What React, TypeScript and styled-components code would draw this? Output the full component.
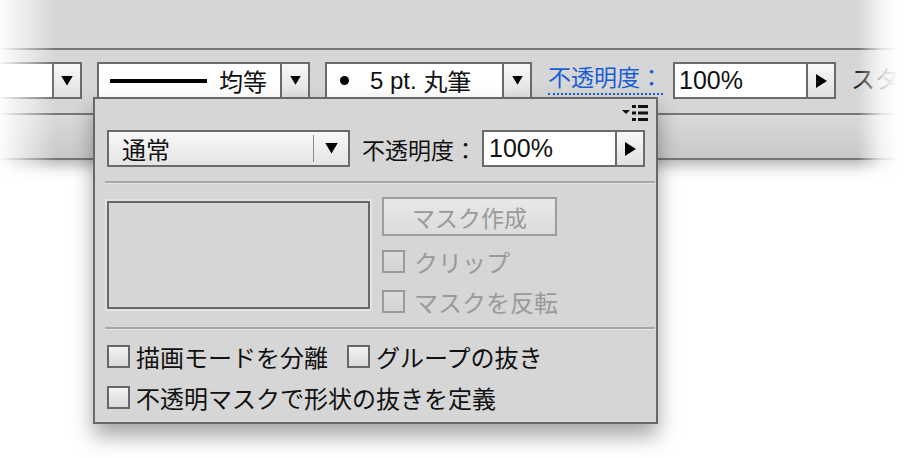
import styled, { createGlobalStyle } from 'styled-components'

const GlobalStyle = createGlobalStyle`
  html, body {
    margin: 0;
    padding: 0;
    background: #fff;
  }
  body {
    font-family: "Liberation Sans", "Noto Sans CJK JP", sans-serif;
    color: #111;
  }
`

const Page = styled.div`
  position: relative;
  width: 908px;
  height: 458px;
  background: #fff;
  overflow: hidden;
`

const Window = styled.div`
  position: relative;
  background: #d6d6d6;
  box-shadow: 0 5px 14px rgba(0, 0, 0, 0.32);
`

const TopArea = styled.div`
  height: 48px;
`

const Toolbar = styled.div`
  display: flex;
  align-items: flex-start;
  gap: 15px;
  height: 67px;
  box-sizing: border-box;
  padding-top: 12px;
  margin-left: -2px;
  border-top: 2px solid #767676;
  border-bottom: 2px solid #767676;
  overflow: hidden;
  white-space: nowrap;
`

const Strip = styled.div`
  height: 43px;
  border-bottom: 2px solid #767676;
  background: linear-gradient(#dadada, #c8c8c8);
`

const Fade = styled.div<{ side: 'left' | 'right' }>`
  position: absolute;
  top: 0;
  height: 190px;
  pointer-events: none;
  z-index: 2;
  ${({ side }) =>
    side === 'left'
      ? `left: 0; width: 56px; background: linear-gradient(to right, rgba(255,255,255,0.95), rgba(255,255,255,0));`
      : `right: 0; width: 50px; background: linear-gradient(to right, rgba(255,255,255,0), rgba(255,255,255,0.75) 45%, #fff 80%);`}
`

const Combo = styled.div<{ w: number }>`
  display: flex;
  flex-shrink: 0;
  width: ${({ w }) => w}px;
  height: 37px;
  box-sizing: border-box;
  border: 2px solid #6a6a6a;
  background: #fff;
`

const ComboBody = styled.div<{ pad?: number }>`
  flex: 1;
  display: flex;
  align-items: center;
  padding-left: ${({ pad }) => pad ?? 0}px;
  font-size: 24px;
`

const ArrowPart = styled.div`
  width: 28px;
  box-sizing: border-box;
  border-left: 2px solid #6a6a6a;
  background: linear-gradient(#f8f8f8, #e0e0e0);
  display: flex;
  align-items: center;
  justify-content: center;
`

const StrokeLine = styled.div`
  width: 97px;
  height: 4px;
  background: #000;
  margin-right: 12px;
`

const Dot = styled.div`
  width: 9px;
  height: 9px;
  border-radius: 50%;
  background: #000;
  margin-right: 21px;
`

const LinkLabel = styled.span`
  display: block;
  margin-top: 2px;
  margin-left: 1px;
  line-height: 29px;
  font-size: 23px;
  color: #1a5ed6;
  border-bottom: 2px dotted #1a5ed6;
  margin-right: -5px;
`

const ValueText = styled.span<{ size?: number }>`
  font-family: "Liberation Sans", Arial, sans-serif;
  font-size: ${({ size }) => size ?? 24}px;
`

const CutText = styled.span`
  font-size: 24px;
  line-height: 36px;
  color: #222;
`

const Panel = styled.div`
  position: absolute;
  left: 93px;
  top: 97px;
  width: 565px;
  height: 327px;
  box-sizing: border-box;
  z-index: 3;
  padding: 0 10px 0 12px;
  background: #d6d6d6;
  border: 2px solid #686868;
  box-shadow: 0 12px 20px rgba(0, 0, 0, 0.35);
`

const PanelHeader = styled.div`
  display: flex;
  justify-content: flex-end;
  height: 31px;
  padding-top: 6px;
  box-sizing: border-box;
  margin-right: -2px;
`

const Row = styled.div`
  display: flex;
  align-items: center;
  white-space: nowrap;
`

const Select = styled.div`
  display: flex;
  flex-shrink: 0;
  align-items: center;
  width: 243px;
  height: 37px;
  box-sizing: border-box;
  border: 2px solid #6a6a6a;
  background: linear-gradient(#f8f8f8, #e4e4e4);
  font-size: 24px;
`

const SelectText = styled.span`
  flex: 1;
  padding-left: 13px;
`

const SelectDivider = styled.div`
  width: 1px;
  height: 27px;
  background: #8a8a8a;
`

const SelectArrow = styled.div`
  width: 34px;
  display: flex;
  justify-content: center;
`

const Label = styled.span`
  font-size: 23px;
  margin: 0 5px 0 12px;
`

const Separator = styled.div<{ top: number }>`
  height: 2px;
  margin: ${({ top }) => top}px -9px 0 -2px;
  background: #a6a6a6;
  border-bottom: 1px solid #e6e6e6;
`

const MaskArea = styled.div`
  display: flex;
  padding-top: 13px;
`

const Thumb = styled.div`
  width: 263px;
  height: 108px;
  margin-top: 4px;
  box-sizing: border-box;
  border: 2px solid #686868;
  box-shadow: 0 0 0 2px #e2e2e2;
  background: #d6d6d6;
`

const MaskColumn = styled.div`
  display: flex;
  flex-direction: column;
  margin-left: 12px;
`

const MaskButton = styled.div`
  width: 175px;
  height: 39px;
  box-sizing: border-box;
  border: 2px solid #9d9d9d;
  background: linear-gradient(#e8e8e8, #dcdcdc);
  color: #9a9a9a;
  font-size: 23px;
  display: flex;
  align-items: center;
  justify-content: center;
  margin-bottom: 14px;
`

const CheckRow = styled.div<{ gap?: number }>`
  display: flex;
  align-items: center;
  height: 23px;
  white-space: nowrap;
  margin-bottom: ${({ gap }) => gap ?? 0}px;
`

const CheckItem = styled.label<{ disabled?: boolean }>`
  display: flex;
  align-items: center;
  font-size: 24px;
  color: ${({ disabled }) => (disabled ? '#9a9a9a' : '#111')};
  margin-right: 19px;
`

const Box = styled.span<{ disabled?: boolean }>`
  display: block;
  width: 23px;
  height: 23px;
  box-sizing: border-box;
  margin-right: ${({ disabled }) => (disabled ? 9 : 6)}px;
  border: 2px solid ${({ disabled }) => (disabled ? '#9b9b9b' : '#666')};
  background: ${({ disabled }) =>
    disabled ? 'linear-gradient(#dedede, #d2d2d2)' : 'linear-gradient(#f4f4f4, #d9d9d9)'};
`

const Options = styled.div`
  padding-top: 15px;
`

const DownTri = ({ size = 12 }: { size?: number }) => (
  <svg width={size} height={size * 0.8} viewBox="0 0 12 10">
    <polygon points="0,0 12,0 6,10" fill="#000" />
  </svg>
)

const RightTri = () => (
  <svg width="11" height="14" viewBox="0 0 11 14">
    <polygon points="0,0 11,7 0,14" fill="#000" />
  </svg>
)

const MenuIcon = () => (
  <svg width="26" height="16" viewBox="0 0 26 16">
    <polygon points="0,5 8,5 4,9" fill="#111" />
    <rect x="10" y="0" width="4" height="3" fill="#111" />
    <rect x="16" y="0" width="10" height="3" fill="#111" />
    <rect x="10" y="6.5" width="4" height="3" fill="#111" />
    <rect x="16" y="6.5" width="10" height="3" fill="#111" />
    <rect x="10" y="13" width="4" height="3" fill="#111" />
    <rect x="16" y="13" width="10" height="3" fill="#111" />
  </svg>
)

export default function App() {
  return (
    <Page>
      <GlobalStyle />
      <Window>
        <TopArea />
        <Toolbar>
          <Combo w={84}>
            <ComboBody />
            <ArrowPart>
              <DownTri />
            </ArrowPart>
          </Combo>
          <Combo w={213}>
            <ComboBody pad={11}>
              <StrokeLine />
              均等
            </ComboBody>
            <ArrowPart>
              <DownTri size={11} />
            </ArrowPart>
          </Combo>
          <Combo w={207}>
            <ComboBody pad={13}>
              <Dot />
              <ValueText>5 pt.&nbsp;</ValueText>丸筆
            </ComboBody>
            <ArrowPart>
              <DownTri size={11} />
            </ArrowPart>
          </Combo>
          <LinkLabel>不透明度：</LinkLabel>
          <Combo w={163}>
            <ComboBody pad={4}>
              <ValueText size={25}>100%</ValueText>
            </ComboBody>
            <ArrowPart>
              <RightTri />
            </ArrowPart>
          </Combo>
          <CutText>スタ</CutText>
        </Toolbar>
        <Strip />
        <Fade side="left" />
        <Fade side="right" />
      </Window>

      <Panel>
        <PanelHeader>
          <MenuIcon />
        </PanelHeader>
        <Row>
          <Select>
            <SelectText>通常</SelectText>
            <SelectDivider />
            <SelectArrow>
              <DownTri size={13} />
            </SelectArrow>
          </Select>
          <Label>不透明度：</Label>
          <Combo w={163}>
            <ComboBody pad={5}>
              <ValueText size={25}>100%</ValueText>
            </ComboBody>
            <ArrowPart>
              <RightTri />
            </ArrowPart>
          </Combo>
        </Row>
        <Separator top={14} />
        <MaskArea>
          <Thumb />
          <MaskColumn>
            <MaskButton>マスク作成</MaskButton>
            <CheckRow gap={17}>
              <CheckItem disabled>
                <Box disabled />
                クリップ
              </CheckItem>
            </CheckRow>
            <CheckRow>
              <CheckItem disabled>
                <Box disabled />
                マスクを反転
              </CheckItem>
            </CheckRow>
          </MaskColumn>
        </MaskArea>
        <Separator top={14} />
        <Options>
          <CheckRow gap={18}>
            <CheckItem>
              <Box />
              描画モードを分離
            </CheckItem>
            <CheckItem>
              <Box />
              グループの抜き
            </CheckItem>
          </CheckRow>
          <CheckRow>
            <CheckItem>
              <Box />
              不透明マスクで形状の抜きを定義
            </CheckItem>
          </CheckRow>
        </Options>
      </Panel>
    </Page>
  )
}
